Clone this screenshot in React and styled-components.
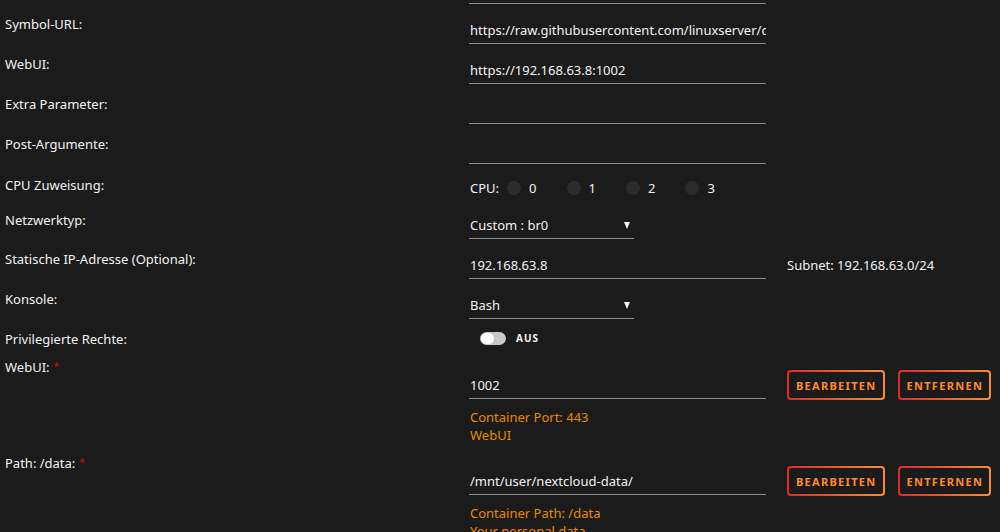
import React from "react";
import styled, { createGlobalStyle } from "styled-components";

const Global = createGlobalStyle`
  html, body { margin: 0; padding: 0; background: #1c1b1b; }
  body { font-family: "Noto Sans", "Open Sans", sans-serif; color: #f2f2f2; font-size: 13px; overflow: hidden; }
`;

const Page = styled.div`
  width: 1000px;
  height: 532px;
  padding-left: 5px;
  box-sizing: border-box;
  overflow: hidden;
`;

const TopEdge = styled.div`
  margin-left: 464px;
  width: 297px;
  height: 4px;
  border-bottom: 1px solid #8a8a8a;
  box-sizing: border-box;
`;

const Row = styled.div`
  display: flex;
  align-items: flex-start;
  height: ${(p) => p.$h || 40}px;
`;

const Label = styled.div`
  width: 464px;
  flex: none;
  padding-top: ${(p) => p.$pt ?? 12}px;
  line-height: 16px;
  color: #f2f2f2;
`;

const Req = styled.span`
  color: #e00000;
  font-size: 10px;
  position: relative;
  top: -2px;
  margin-left: 4px;
`;

const Content = styled.div`
  display: flex;
  align-items: flex-end;
  gap: 21px;
`;

const TextInput = styled.div`
  width: ${(p) => p.$w || 297}px;
  height: ${(p) => p.$h || 40}px;
  box-sizing: border-box;
  padding: ${(p) => (p.$h ? p.$h - 22 : 18)}px 1px 0 1px;
  line-height: 16px;
  border-bottom: 1px solid #8a8a8a;
  white-space: nowrap;
  overflow: hidden;
  color: #f2f2f2;
`;

const Select = styled(TextInput)`
  width: 165px;
  display: flex;
  justify-content: space-between;
  padding-right: 4px;
`;

const Caret = styled.span`
  width: 0;
  height: 0;
  margin-top: 5px;
  border-left: 3.5px solid transparent;
  border-right: 3.5px solid transparent;
  border-top: 7px solid #f2f2f2;
`;

const Side = styled.div`
  line-height: 16px;
  padding-bottom: 6px;
`;

const CpuLine = styled.div`
  display: flex;
  align-items: center;
  padding-top: 16px;
  line-height: 16px;
  margin-left: 1px;
`;

const CpuItem = styled.label`
  display: flex;
  align-items: center;
  gap: 8px;
  margin-left: ${(p) => (p.$first ? 8 : 30)}px;
`;

const Radio = styled.span`
  width: 14px;
  height: 14px;
  border-radius: 50%;
  background: #2c2c2c;
`;

const SwitchWrap = styled.div`
  display: flex;
  align-items: center;
  gap: 10px;
  padding-top: 12px;
  margin-left: 11px;
`;

const Track = styled.span`
  width: 26px;
  height: 13px;
  border-radius: 7px;
  background: #c8c8c8;
  display: flex;
  align-items: center;
  padding: 0 1px;
  box-sizing: border-box;
`;

const Knob = styled.span`
  width: 13px;
  height: 11px;
  border-radius: 6px;
  background: #ffffff;
`;

const SwitchText = styled.span`
  font-size: 10px;
  font-weight: 700;
  letter-spacing: 1px;
  color: #f2f2f2;
`;

const PortRow = styled.div`
  display: flex;
  align-items: flex-start;
`;

const PortBody = styled.div`
  display: flex;
  flex-direction: column;
  padding-top: 12px;
`;

const InputLine = styled.div`
  display: flex;
  align-items: flex-end;
`;

const Actions = styled.div`
  display: flex;
  align-items: flex-end;
  gap: 13px;
  margin-left: 21px;
`;

const Button = styled.button`
  height: 30px;
  padding: 0 6px 0 7px;
  border: 2px solid transparent;
  border-radius: 4px;
  background: linear-gradient(#1c1b1b, #1c1b1b) padding-box,
    linear-gradient(90deg, #e22828, #ff8c2f) border-box;
  color: #ff8c2f;
  font-family: "Noto Sans", sans-serif;
  font-size: 11px;
  font-weight: 700;
  letter-spacing: 1.3px;
  text-transform: uppercase;
  margin-bottom: -1px;
`;

const Desc = styled.div`
  color: #e68a00;
  line-height: 18px;
  padding-top: 9px;
  height: 35px;
  margin-left: 1px;
`;

function Field({ label, value }) {
  return (
    <Row>
      <Label>{label}</Label>
      <TextInput>{value}</TextInput>
    </Row>
  );
}

function Port({ label, value, desc }) {
  return (
    <PortRow>
      <Label>
        {label}
        <Req>*</Req>
      </Label>
      <PortBody>
        <InputLine>
          <TextInput>{value}</TextInput>
          <Actions>
            <Button>Bearbeiten</Button>
            <Button>Entfernen</Button>
          </Actions>
        </InputLine>
        <Desc>
          {desc.map((d) => (
            <div key={d}>{d}</div>
          ))}
        </Desc>
      </PortBody>
    </PortRow>
  );
}

export default function App() {
  return (
    <Page>
      <Global />
      <TopEdge />
      <Field label="Symbol-URL:" value="https://raw.githubusercontent.com/linuxserver/docker-templates/master/linuxserver.io/img/nextcloud-icon.png" />
      <Field label="WebUI:" value="https://192.168.63.8:1002" />
      <Field label="Extra Parameter:" value="" />
      <Field label="Post-Argumente:" value="" />
      <Row $h={36}>
        <Label $pt={13}>CPU Zuweisung:</Label>
        <CpuLine>
          CPU:
          {[0, 1, 2, 3].map((n) => (
            <CpuItem key={n} $first={n === 0}>
              <Radio />
              {n}
            </CpuItem>
          ))}
        </CpuLine>
      </Row>
      <Row $h={39}>
        <Label>Netzwerktyp:</Label>
        <Select $h={39}>
          Custom : br0
          <Caret />
        </Select>
      </Row>
      <Row>
        <Label>Statische IP-Adresse (Optional):</Label>
        <Content>
          <TextInput>192.168.63.8</TextInput>
          <Side>Subnet: 192.168.63.0/24</Side>
        </Content>
      </Row>
      <Row>
        <Label>Konsole:</Label>
        <Select>
          Bash
          <Caret />
        </Select>
      </Row>
      <Row $h={28}>
        <Label>Privilegierte Rechte:</Label>
        <SwitchWrap>
          <Track>
            <Knob />
          </Track>
          <SwitchText>AUS</SwitchText>
        </SwitchWrap>
      </Row>
      <Port label="WebUI:" value="1002" desc={["Container Port: 443", "WebUI"]} />
      <Port label="Path: /data:" value="/mnt/user/nextcloud-data/" desc={["Container Path: /data", "Your personal data."]} />
    </Page>
  );
}
